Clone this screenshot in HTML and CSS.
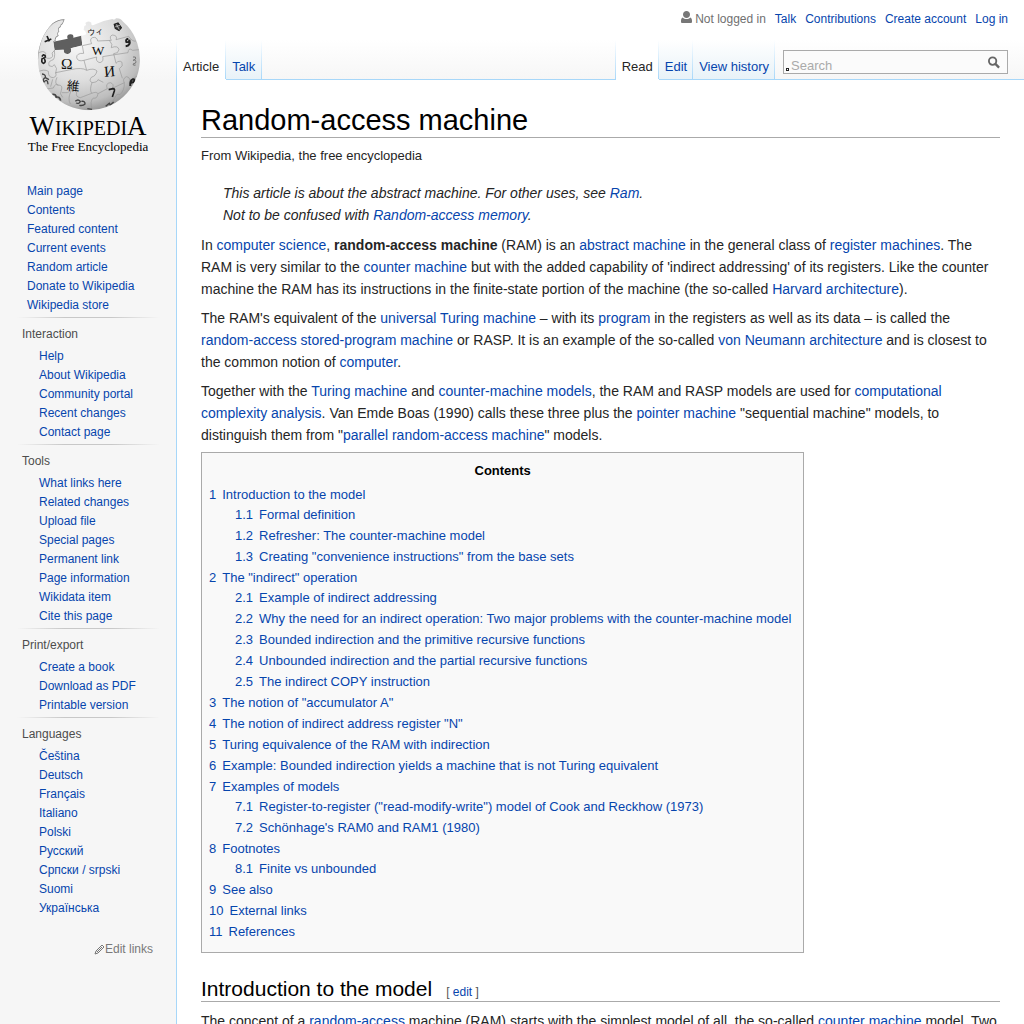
FILE: index.html
```html
<!DOCTYPE html>
<html lang="en">
<head>
<meta charset="utf-8">
<meta name="viewport" content="width=device-width, initial-scale=1">
<title>Random-access machine - Wikipedia</title>
<link rel="stylesheet" href="styles.css">
</head>
<body>
<div class="page">
  <aside class="sidebar">
    <a class="logo" href="#">
      <svg class="globe" viewBox="99 45 330 291" aria-hidden="true">
        <defs>
          <radialGradient id="ball" cx="0.4" cy="0.3" r="0.75">
            <stop offset="0" stop-color="#f7f7f7"/>
            <stop offset="0.5" stop-color="#dedede"/>
            <stop offset="0.8" stop-color="#bdbdbd"/>
            <stop offset="1" stop-color="#858585"/>
          </radialGradient>
          <clipPath id="shape"><path d="M194 58 Q176 57 158 70 A153 153 0 1 0 382 77 L368 64 Q362 54 348 55 Q344 61 337 57 Q308 61 279 76 Q273 77 274 68 Q264 60 256 69 Q261 77 253 78 L251 89 Q258 93 259 103 L244 108 L247 136 L212 145 Q217 159 204 162 Q190 163 191 149 L164 150 L160 126 L167 122 Q164 113 176 107 Q171 100 178 94 Q173 84 182 81 Q183 73 188 72 Z"/></clipPath>
        </defs>
        <path fill="#5f5f5f" d="M160 125 L203 116 Q198 105 210 103 Q222 102 220 113 L244 107 L247 137 L213 145 Q217 159 204 162 Q190 163 191 149 L163 151 Z"/>
        <g clip-path="url(#shape)">
          <rect x="99" y="45" width="330" height="291" fill="url(#ball)"/>
          <path fill="none" stroke="#888" stroke-width="4" d="M194 58 L188 72 Q183 73 182 81 Q173 84 178 94 Q171 100 176 107 Q164 113 167 122 L160 126 M194 58 Q176 57 158 70 Q116 105 112 180"/>
          <g fill="none" stroke="#999" stroke-width="2">
            <path d="M110 161 Q132 149 137 160 Q132 177 149 175 Q162 173 156 159 L164 151"/>
            <path d="M163 150 Q167 180 155 181 Q144 184 147 197 Q158 204 163 194 Q174 204 167 220"/>
            <path d="M112 216 Q133 206 145 214 Q144 233 160 233 Q171 230 167 218 L212 209 Q219 203 214 199 M212 209 Q246 201 260 211"/>
            <path d="M247 137 L251 160 Q229 159 230 173 Q233 186 252 181 L260 211 Q282 203 291 213 Q287 229 275 231 Q265 242 276 248 Q292 247 294 239 L310 247"/>
            <path d="M247 137 L275 131 Q268 117 277 113 Q291 109 293 123 L334 121 Q326 108 338 105 Q354 107 348 119 L386 109"/>
            <path d="M328 121 Q340 134 334 143 Q354 135 357 149 Q355 161 341 161 L348 190 Q357 179 366 187 Q371 199 358 206 L367 235"/>
            <path d="M252 181 L290 171 Q286 185 300 188 Q312 185 308 170 L344 164 L384 158 Q385 141 398 151 L417 149"/>
            <path d="M171 232 Q162 252 174 255 Q190 255 184 271 Q177 281 188 292 M138 267 L160 264 Q165 249 175 256 M186 278 Q204 281 213 272 Q224 267 230 278 Q226 291 241 293 L275 280"/>
            <path d="M276 248 Q268 269 275 280 Q289 274 294 281 Q291 298 280 294 Q268 304 277 329 M294 281 L322 266 Q315 250 331 248 Q344 252 337 265 L373 248 Q366 237 379 230 Q391 232 389 243 L411 228"/>
            <path d="M373 248 Q374 271 360 284 Q349 280 345 292 L331 315 M213 273 Q202 296 211 312 M158 238 L152 260 M386 109 Q397 126 408 123"/>
          </g>
          <g class="globe-letters">
            <text x="183" y="206" font-size="46">Ω</text>
            <text x="275" y="165" font-size="40">W</text>
            <text x="312" y="230" font-size="46" transform="rotate(-5 328 215)">И</text>
            <text x="201" y="271" font-size="38" transform="rotate(6 220 258)">維</text>
            <text x="262" y="105" font-size="24" transform="rotate(-8 280 95)">ウィ</text>
            <path fill="none" stroke="#222" stroke-width="5" d="M326 269 L339 266 Q345 266 343 273 L337 291"/>
            <path fill="none" stroke="#222" stroke-width="5" d="M126 170 Q130 160 136 168 Q136 176 128 174 M127 174 Q122 188 131 190 Q139 186 133 177"/>
            <path fill="none" stroke="#222" stroke-width="5" d="M134 125 L154 117 M141 108 L148 124"/>
            <path fill="none" stroke="#222" stroke-width="6" d="M385 116 Q376 117 379 126 Q388 128 388 119 Q393 137 377 139"/>
            <path fill="#444" stroke="#222" stroke-width="4" d="M343 73 L354 69 L364 83 L357 91 L346 85 Z"/>
            <path fill="none" stroke="#ddd" stroke-width="2" d="M349 73 L358 89 M346 80 L360 76"/>
            <path fill="none" stroke="#444" stroke-width="4" d="M126 222 Q138 223 136 233 Q126 238 132 246 Q143 234 144 253 M136 233 L147 239"/>
            <path fill="none" stroke="#777" stroke-width="3" d="M399 171 Q409 168 407 177 L399 181 Q410 178 407 189 L399 192 Q399 198 407 195"/>
            <path fill="none" stroke="#222" stroke-width="6" d="M391 258 Q389 242 398 238 Q406 236 401 246 L392 249"/>
            <path fill="none" stroke="#444" stroke-width="4" d="M226 304 Q234 296 241 304 Q238 313 228 309 M244 304 Q256 302 255 312 Q250 318 238 316"/>
            <path fill="none" stroke="#444" stroke-width="5" d="M157 283 Q169 282 168 292 Q179 288 182 302"/>
            <path fill="none" stroke="#444" stroke-width="4" d="M317 319 L328 310 L331 315 L341 306 M262 326 L276 328"/>
          </g>
        </g>
      </svg>
      <span class="wordmark"><span class="cap">W</span>IKIPEDI<span class="cap">A</span></span>
      <span class="tagline">The Free Encyclopedia</span>
    </a>
    <nav class="portal portal-main" aria-label="Navigation">
      <ul>
        <li><a href="#">Main page</a></li>
        <li><a href="#">Contents</a></li>
        <li><a href="#">Featured content</a></li>
        <li><a href="#">Current events</a></li>
        <li><a href="#">Random article</a></li>
        <li><a href="#">Donate to Wikipedia</a></li>
        <li><a href="#">Wikipedia store</a></li>
      </ul>
    </nav>
    <nav class="portal">
      <h3>Interaction</h3>
      <ul>
        <li><a href="#">Help</a></li>
        <li><a href="#">About Wikipedia</a></li>
        <li><a href="#">Community portal</a></li>
        <li><a href="#">Recent changes</a></li>
        <li><a href="#">Contact page</a></li>
      </ul>
    </nav>
    <nav class="portal">
      <h3>Tools</h3>
      <ul>
        <li><a href="#">What links here</a></li>
        <li><a href="#">Related changes</a></li>
        <li><a href="#">Upload file</a></li>
        <li><a href="#">Special pages</a></li>
        <li><a href="#">Permanent link</a></li>
        <li><a href="#">Page information</a></li>
        <li><a href="#">Wikidata item</a></li>
        <li><a href="#">Cite this page</a></li>
      </ul>
    </nav>
    <nav class="portal">
      <h3>Print/export</h3>
      <ul>
        <li><a href="#">Create a book</a></li>
        <li><a href="#">Download as PDF</a></li>
        <li><a href="#">Printable version</a></li>
      </ul>
    </nav>
    <nav class="portal">
      <h3>Languages</h3>
      <ul>
        <li><a href="#" lang="cs">Čeština</a></li>
        <li><a href="#" lang="de">Deutsch</a></li>
        <li><a href="#" lang="fr">Français</a></li>
        <li><a href="#" lang="it">Italiano</a></li>
        <li><a href="#" lang="pl">Polski</a></li>
        <li><a href="#" lang="ru">Русский</a></li>
        <li><a href="#" lang="sr">Српски / srpski</a></li>
        <li><a href="#" lang="fi">Suomi</a></li>
        <li><a href="#" lang="uk">Українська</a></li>
      </ul>
      <a class="edit-links" href="#"><svg class="pencil" viewBox="0 0 11 11" aria-hidden="true"><path d="M1 10 L2 7 L8 1 L10 3 L4 9 Z M3 8 L8 3" fill="none" stroke="#777"/></svg>Edit links</a>
    </nav>
  </aside>

  <div class="main">
    <header class="header">
      <ul class="personal">
        <li class="anon"><svg class="user" viewBox="0 0 11 12" aria-hidden="true"><path fill="#777" d="M5.500 0C7.500 0 9 1.500 9 3.500S7.500 7 5.500 7 2 5.500 2 3.500 3.500 0 5.500 0ZM1.800 6.500C3.500 8.500 7.500 8.500 9.200 6.500 10.500 7 11 8 11 10V11Q11 12 10 12H1Q0 12 0 11V10C0 8 .5 7 1.800 6.500Z"/></svg>Not logged in</li>
        <li><a href="#">Talk</a></li>
        <li><a href="#">Contributions</a></li>
        <li><a href="#">Create account</a></li>
        <li><a href="#">Log in</a></li>
      </ul>
      <div class="bar">
        <nav class="tabs" aria-label="Namespaces">
          <a class="tab selected" href="#">Article</a>
          <a class="tab" href="#">Talk</a>
        </nav>
        <nav class="tabs views" aria-label="Views">
          <a class="tab selected" href="#">Read</a>
          <a class="tab" href="#">Edit</a>
          <a class="tab" href="#">View history</a>
        </nav>
        <form class="search">
          <span class="marker"></span>
          <input type="search" placeholder="Search" aria-label="Search">
          <button type="button" aria-label="Go"><svg viewBox="0 0 13 13" aria-hidden="true"><circle cx="5" cy="5" r="4" fill="none" stroke="#666" stroke-width="2"/><path d="M8 8 L12 12" stroke="#666" stroke-width="2.500"/></svg></button>
        </form>
      </div>
    </header>

    <main class="content">
      <h1>Random-access machine</h1>
      <div class="site-sub">From Wikipedia, the free encyclopedia</div>
      <div class="hatnote">This article is about the abstract machine. For other uses, see <a href="#">Ram</a>.</div>
      <div class="hatnote">Not to be confused with <a href="#">Random-access memory</a>.</div>
      <div class="intro">
      <p>In <a href="#">computer science</a>, <b>random-access machine</b> (RAM) is an <a href="#">abstract machine</a> in the general class of <a href="#">register machines</a>. The RAM is very similar to the <a href="#">counter machine</a> but with the added capability of 'indirect addressing' of its registers. Like the counter machine the RAM has its instructions in the finite-state portion of the machine (the so-called <a href="#">Harvard architecture</a>).</p>
      <p>The RAM's equivalent of the <a href="#">universal Turing machine</a> – with its <a href="#">program</a> in the registers as well as its data – is called the <a href="#">random-access stored-program machine</a> or RASP. It is an example of the so-called <a href="#">von Neumann architecture</a> and is closest to the common notion of <a href="#">computer</a>.</p>
      <p>Together with the <a href="#">Turing machine</a> and <a href="#">counter-machine models</a>, the RAM and RASP models are used for <a href="#">computational complexity analysis</a>. Van Emde Boas (1990) calls these three plus the <a href="#">pointer machine</a> "sequential machine" models, to distinguish them from "<a href="#">parallel random-access machine</a>" models.</p>
      </div>

      <nav class="toc" aria-labelledby="toc-title">
        <h2 id="toc-title">Contents</h2>
        <ul class="toc-list">
          <li><a href="#"><span>1</span><span>Introduction to the model</span></a>
            <ul>
              <li><a href="#"><span>1.1</span><span>Formal definition</span></a></li>
              <li><a href="#"><span>1.2</span><span>Refresher: The counter-machine model</span></a></li>
              <li><a href="#"><span>1.3</span><span>Creating "convenience instructions" from the base sets</span></a></li>
            </ul>
          </li>
          <li><a href="#"><span>2</span><span>The "indirect" operation</span></a>
            <ul>
              <li><a href="#"><span>2.1</span><span>Example of indirect addressing</span></a></li>
              <li><a href="#"><span>2.2</span><span>Why the need for an indirect operation: Two major problems with the counter-machine model</span></a></li>
              <li><a href="#"><span>2.3</span><span>Bounded indirection and the primitive recursive functions</span></a></li>
              <li><a href="#"><span>2.4</span><span>Unbounded indirection and the partial recursive functions</span></a></li>
              <li><a href="#"><span>2.5</span><span>The indirect COPY instruction</span></a></li>
            </ul>
          </li>
          <li><a href="#"><span>3</span><span>The notion of "accumulator A"</span></a></li>
          <li><a href="#"><span>4</span><span>The notion of indirect address register "N"</span></a></li>
          <li><a href="#"><span>5</span><span>Turing equivalence of the RAM with indirection</span></a></li>
          <li><a href="#"><span>6</span><span>Example: Bounded indirection yields a machine that is not Turing equivalent</span></a></li>
          <li><a href="#"><span>7</span><span>Examples of models</span></a>
            <ul>
              <li><a href="#"><span>7.1</span><span>Register-to-register ("read-modify-write") model of Cook and Reckhow (1973)</span></a></li>
              <li><a href="#"><span>7.2</span><span>Schönhage's RAM0 and RAM1 (1980)</span></a></li>
            </ul>
          </li>
          <li><a href="#"><span>8</span><span>Footnotes</span></a>
            <ul>
              <li><a href="#"><span>8.1</span><span>Finite vs unbounded</span></a></li>
            </ul>
          </li>
          <li><a href="#"><span>9</span><span>See also</span></a></li>
          <li><a href="#"><span>10</span><span>External links</span></a></li>
          <li><a href="#"><span>11</span><span>References</span></a></li>
        </ul>
      </nav>

      <h2 class="section">Introduction to the model<span class="edit-section">[ <a href="#">edit</a> ]</span></h2>
      <p>The concept of a <a href="#">random-access</a> machine (RAM) starts with the simplest model of all, the so-called <a href="#">counter machine</a> model. Two</p>
    </main>
  </div>
</div>
</body>
</html>
```
FILE: styles.css
```css
* { box-sizing: border-box; }

body {
  margin: 0;
  background: #f6f6f6;
  color: #252525;
  font-family: "Liberation Sans", Arial, sans-serif;
  font-size: 14px;
  line-height: 22px;
}

a { color: #0645ad; text-decoration: none; }
a:hover { text-decoration: underline; }
ul { margin: 0; padding: 0; list-style: none; }

.page {
  display: grid;
  grid-template-columns: 176px minmax(0, 1fr);
  background: linear-gradient(#fff 40px, #f6f6f6 80px) top / 100% 80px no-repeat;
}

/* Sidebar */
.sidebar { font-size: 12px; line-height: 19px; padding-bottom: 24px; }

.logo {
  display: flex;
  flex-direction: column;
  align-items: center;
  height: 182px;
  padding-top: 15px;
  color: #000;
  font-family: "Liberation Serif", serif;
}
.logo:hover { text-decoration: none; }
.globe { width: 110px; height: 97px; }
.globe-letters { fill: #111; font-family: "Liberation Serif", "Noto Sans CJK JP", "DejaVu Sans", serif; }
.wordmark { font-size: 20px; line-height: 28px; white-space: nowrap; }
.cap { font-size: 27px; }
.tagline { font-size: 13px; line-height: 10px; white-space: nowrap; }

.portal { padding: 0 0 2px 39px; }
.portal-main { padding-left: 27px; }
.portal::before {
  content: "";
  display: block;
  height: 1px;
  margin: 0 16px 7px -22px;
  background: linear-gradient(to right, transparent, #c8c8c8 33%, #c8c8c8 66%, transparent);
}
.portal-main::before { display: none; }
.portal h3 {
  margin: 0 0 3px -17px;
  color: #4d4d4d;
  font-size: 12px;
  font-weight: normal;
}
.edit-links {
  display: flex;
  justify-content: flex-end;
  align-items: center;
  margin: 22px 23px 0 0;
  color: #797979;
}
.pencil { width: 11px; height: 11px; }

/* Header */
.header { height: 80px; }

.personal {
  display: flex;
  justify-content: flex-end;
  gap: 9px;
  height: 40px;
  padding: 10px 16px 0 0;
  font-size: 12px;
  line-height: 19px;
}
.anon { color: #707070; }
.user { width: 11px; height: 12px; margin-right: 3px; }

.bar {
  display: flex;
  height: 40px;
  background: linear-gradient(#a7d7f9, #a7d7f9) bottom / 100% 1px no-repeat;
}
.bar::before, .views::before, .tab::after {
  content: "";
  width: 1px;
  background: linear-gradient(#fff, #a7d7f9);
}
.tabs { display: flex; }
.views { margin-left: auto; }
.tab {
  display: flex;
  padding-left: 6px;
  border-bottom: 1px solid #a7d7f9;
  background: linear-gradient(#fff, #e8f2f8);
  font-size: 13px;
  line-height: 53px;
}
.tab::after { margin-left: 6px; }
.views .tab::after { margin-left: 5px; }
.tab.selected { border-bottom-color: #fff; background: #fff; color: #252525; }

.search {
  display: flex;
  align-items: flex-end;
  width: 225px;
  height: 24px;
  margin: 10px 16px 0 8px;
  border: 1px solid #aaa;
  background: #fbfbfb;
}
.marker { width: 3px; height: 3px; margin: 0 0 2px 2px; border: 1px solid #222; }
.search input {
  flex: 1;
  min-width: 0;
  height: 14px;
  margin: 0;
  padding: 0 2px;
  border: 0;
  outline: 0;
  background: none;
  color: #252525;
  font: 13px/14px "Liberation Sans", Arial, sans-serif;
}
.search input::placeholder { color: #aaa; opacity: 1; }
.search button {
  align-self: center;
  display: flex;
  margin: 0 7px 0 0;
  padding: 0;
  border: 0;
  background: none;
}
.search svg { width: 12px; height: 13px; }

/* Article */
.content {
  padding: 24px 24px 24px;
  border-left: 1px solid #a7d7f9;
  background: #fff;
}
h1, .section {
  margin: 0;
  border-bottom: 1px solid #aaa;
  color: #000;
  font-weight: normal;
}
h1 { font-size: 29px; line-height: 33px; }
.site-sub { margin: 7px 0 15px; font-size: 13px; line-height: 22px; }
.hatnote { padding-left: 22px; font-style: italic; }
p { margin: 7px 0; }
.intro { margin: 8px 0 6px; }
.intro p:first-child { margin-top: 0; }
.intro p:last-child { margin-bottom: 0; }

.toc {
  width: fit-content;
  padding: 7px 7px 10px;
  border: 1px solid #aaa;
  background: #f9f9f9;
  font-size: 13px;
  line-height: 21px;
}
.toc h2 { margin: 0 0 3px; color: #000; font-size: 13px; line-height: 21px; text-align: center; }
.toc-list { padding-right: 5px; }
.toc a { display: flex; gap: 6px; }
.toc ul ul { margin: -1px 0 0 26px; }

.section {
  display: flex;
  align-items: baseline;
  gap: 14px;
  margin-top: 24px;
  font-size: 21px;
  line-height: 24px;
}
.edit-section { color: #555; font-size: 12px; line-height: 16px; }
.section + p { margin-top: 8px; }
```
